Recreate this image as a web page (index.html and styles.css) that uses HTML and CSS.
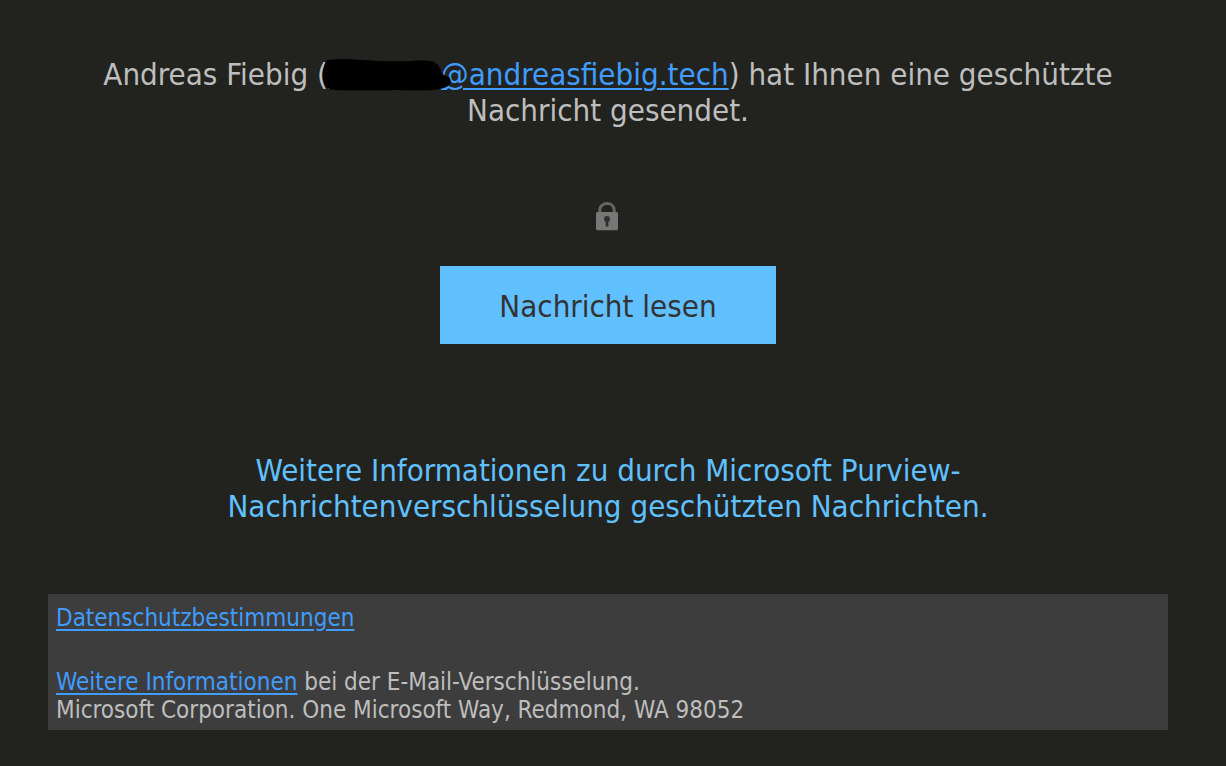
FILE: index.html
```html
<!DOCTYPE html>
<html lang="de">
<head>
<meta charset="utf-8">
<meta name="viewport" content="width=device-width, initial-scale=1">
<title>Geschützte Nachricht</title>
<link rel="stylesheet" href="styles.css">
</head>
<body>
<main class="mail">
  <p class="intro">Andreas Fiebig (<a class="link" href="#"><span class="redacted"><svg class="redaction" viewBox="0 0 132 34" aria-hidden="true"><path fill="#409cff" d="M113 11L118 9V15Z"/><path fill="#409cff" d="M6 29H126V31H6Z"/><path d="M5 2Q20 0 40 2Q65 4 90 3Q105 1 112 4Q118 7 119 13Q121 18 127 19Q131 24 126 28Q121 31 112 32Q95 33 75 32Q40 33 12 32Q4 32 2 25Q-1 17 2 9Q3 4 5 2Z"/></svg></span>@andreasfiebig.tech</a>) hat Ihnen eine geschützte Nachricht gesendet.</p>
  <svg class="lock" viewBox="0 0 24 30" role="img" aria-label="Schloss">
    <path d="M4.800 11V8C4.800 4 8 1.600 12 1.600S19.200 4 19.200 8V11" fill="none" stroke="#666" stroke-width="3"/>
    <rect x="1" y="10" width="22" height="18.300" rx="1.500" fill="#777"/>
    <circle cx="12" cy="17" r="3" fill="#303030"/>
    <path d="M10.600 18h2.800v6.500h-2.800z" fill="#303030"/>
  </svg>
  <button class="read" type="button">Nachricht lesen</button>
  <a class="more" href="#">Weitere Informationen zu durch Microsoft Purview-Nachrichtenverschlüsselung geschützten Nachrichten.</a>
  <footer class="footer">
    <p class="privacy"><a class="link" href="#">Datenschutzbestimmungen</a></p>
    <p><a class="link" href="#">Weitere Informationen</a> bei der E-Mail-Verschlüsselung.<br>Microsoft Corporation. One Microsoft Way, Redmond, WA 98052</p>
  </footer>
</main>
</body>
</html>
```
FILE: styles.css
```css
* { box-sizing: border-box; }
body {
  margin: 0;
  background: #22231e;
  color: #bebebe;
  font-family: "DejaVu Sans Condensed", "Noto Sans", sans-serif;
}
p { margin: 0; }
.mail {
  display: flex;
  flex-direction: column;
  align-items: center;
  padding: 56px 58px 36px 48px;
  font-size: 31px;
  line-height: 36px;
}
.intro {
  max-width: 1060px;
  text-align: center;
}
.link {
  color: #409cff;
  text-decoration: underline;
  text-decoration-thickness: 2px;
  text-underline-offset: 3px;
}
.redacted {
  position: relative;
  display: inline-block;
  width: 113px;
  height: 24px;
}
.redaction {
  position: absolute;
  left: -6px;
  top: -3px;
  width: 132px;
  height: 34px;
}
.lock {
  width: 24px;
  height: 30px;
  margin: 74px 2px 0 0;
}
.read {
  width: 336px;
  height: 78px;
  margin-top: 34px;
  padding: 2px 0 0;
  border: 0;
  background: #61c0ff;
  color: #333;
  font: inherit;
}
.more {
  max-width: 800px;
  margin-top: 108px;
  color: #61c0ff;
  text-align: center;
  text-decoration: none;
}
.footer {
  align-self: stretch;
  margin-top: 70px;
  padding: 10px 8px 6px;
  background: #3d3d3d;
  font-size: 24px;
  line-height: 28px;
}
.privacy { margin-bottom: 36px; }
```
